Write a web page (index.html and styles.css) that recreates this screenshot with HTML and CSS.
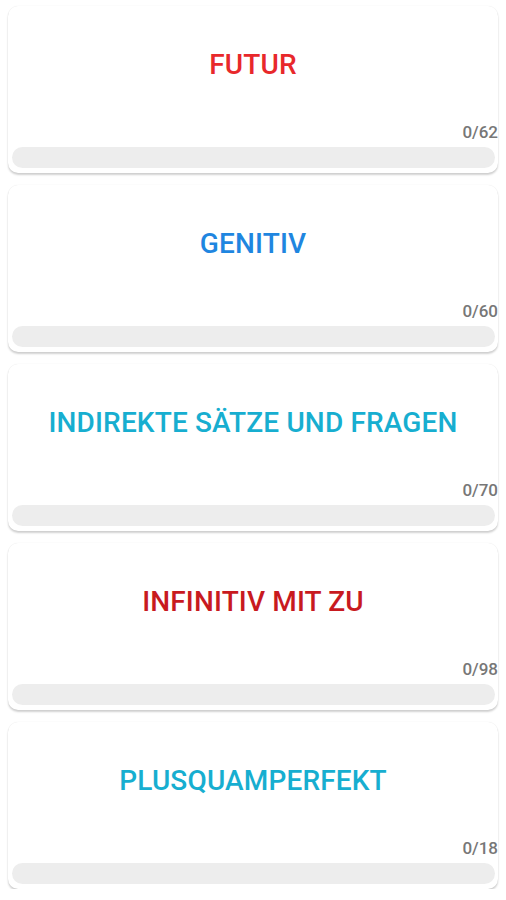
FILE: index.html
```html
<!DOCTYPE html>
<html lang="de">
<head>
<meta charset="utf-8">
<title>Lektionen</title>
<link rel="stylesheet" href="styles.css">
</head>
<body>
<main class="list">
  <section class="card">
    <h2 class="title red">FUTUR</h2>
    <div class="count">0/62</div>
    <div class="bar"><div class="fill" style="width:0%"></div></div>
  </section>
  <section class="card">
    <h2 class="title blue">GENITIV</h2>
    <div class="count">0/60</div>
    <div class="bar"><div class="fill" style="width:0%"></div></div>
  </section>
  <section class="card">
    <h2 class="title cyan">INDIREKTE SÄTZE UND FRAGEN</h2>
    <div class="count">0/70</div>
    <div class="bar"><div class="fill" style="width:0%"></div></div>
  </section>
  <section class="card">
    <h2 class="title darkred">INFINITIV MIT ZU</h2>
    <div class="count">0/98</div>
    <div class="bar"><div class="fill" style="width:0%"></div></div>
  </section>
  <section class="card">
    <h2 class="title cyan">PLUSQUAMPERFEKT</h2>
    <div class="count">0/18</div>
    <div class="bar"><div class="fill" style="width:0%"></div></div>
  </section>
</main>
</body>
</html>
```
FILE: styles.css
```css
html, body {
  margin: 0;
  padding: 0;
  background: #ffffff;
  font-family: Roboto, "Liberation Sans", Arial, sans-serif;
}

.list {
  display: flex;
  flex-direction: column;
  gap: 12px;
  padding: 6px 8px 0 8px;
}

.card {
  display: flex;
  flex-direction: column;
  height: 167px;
  box-sizing: border-box;
  background: #ffffff;
  border-radius: 10px;
  box-shadow: 0 2px 2px rgba(0, 0, 0, 0.18), 0 0 1px rgba(0, 0, 0, 0.12);
  padding: 0 0 5px 0;
}

.title {
  margin: 44px 0 0 0;
  height: 30px;
  line-height: 30px;
  text-align: center;
  font-size: 28px;
  font-weight: 500;
  letter-spacing: 0.15px;
}

.red { color: #e8282b; }
.blue { color: #1f86e0; }
.cyan { color: #17aed0; }
.darkred { color: #c81a1f; }

.count {
  margin-top: 42px;
  height: 20px;
  line-height: 20px;
  text-align: right;
  font-size: 17px;
  font-weight: 500;
  color: #777777;
}

.bar {
  margin: 5px 3px 0 4px;
  height: 21px;
  border-radius: 11px;
  background: #ededed;
  overflow: hidden;
}

.fill {
  height: 100%;
  background: #4caf50;
}
```
